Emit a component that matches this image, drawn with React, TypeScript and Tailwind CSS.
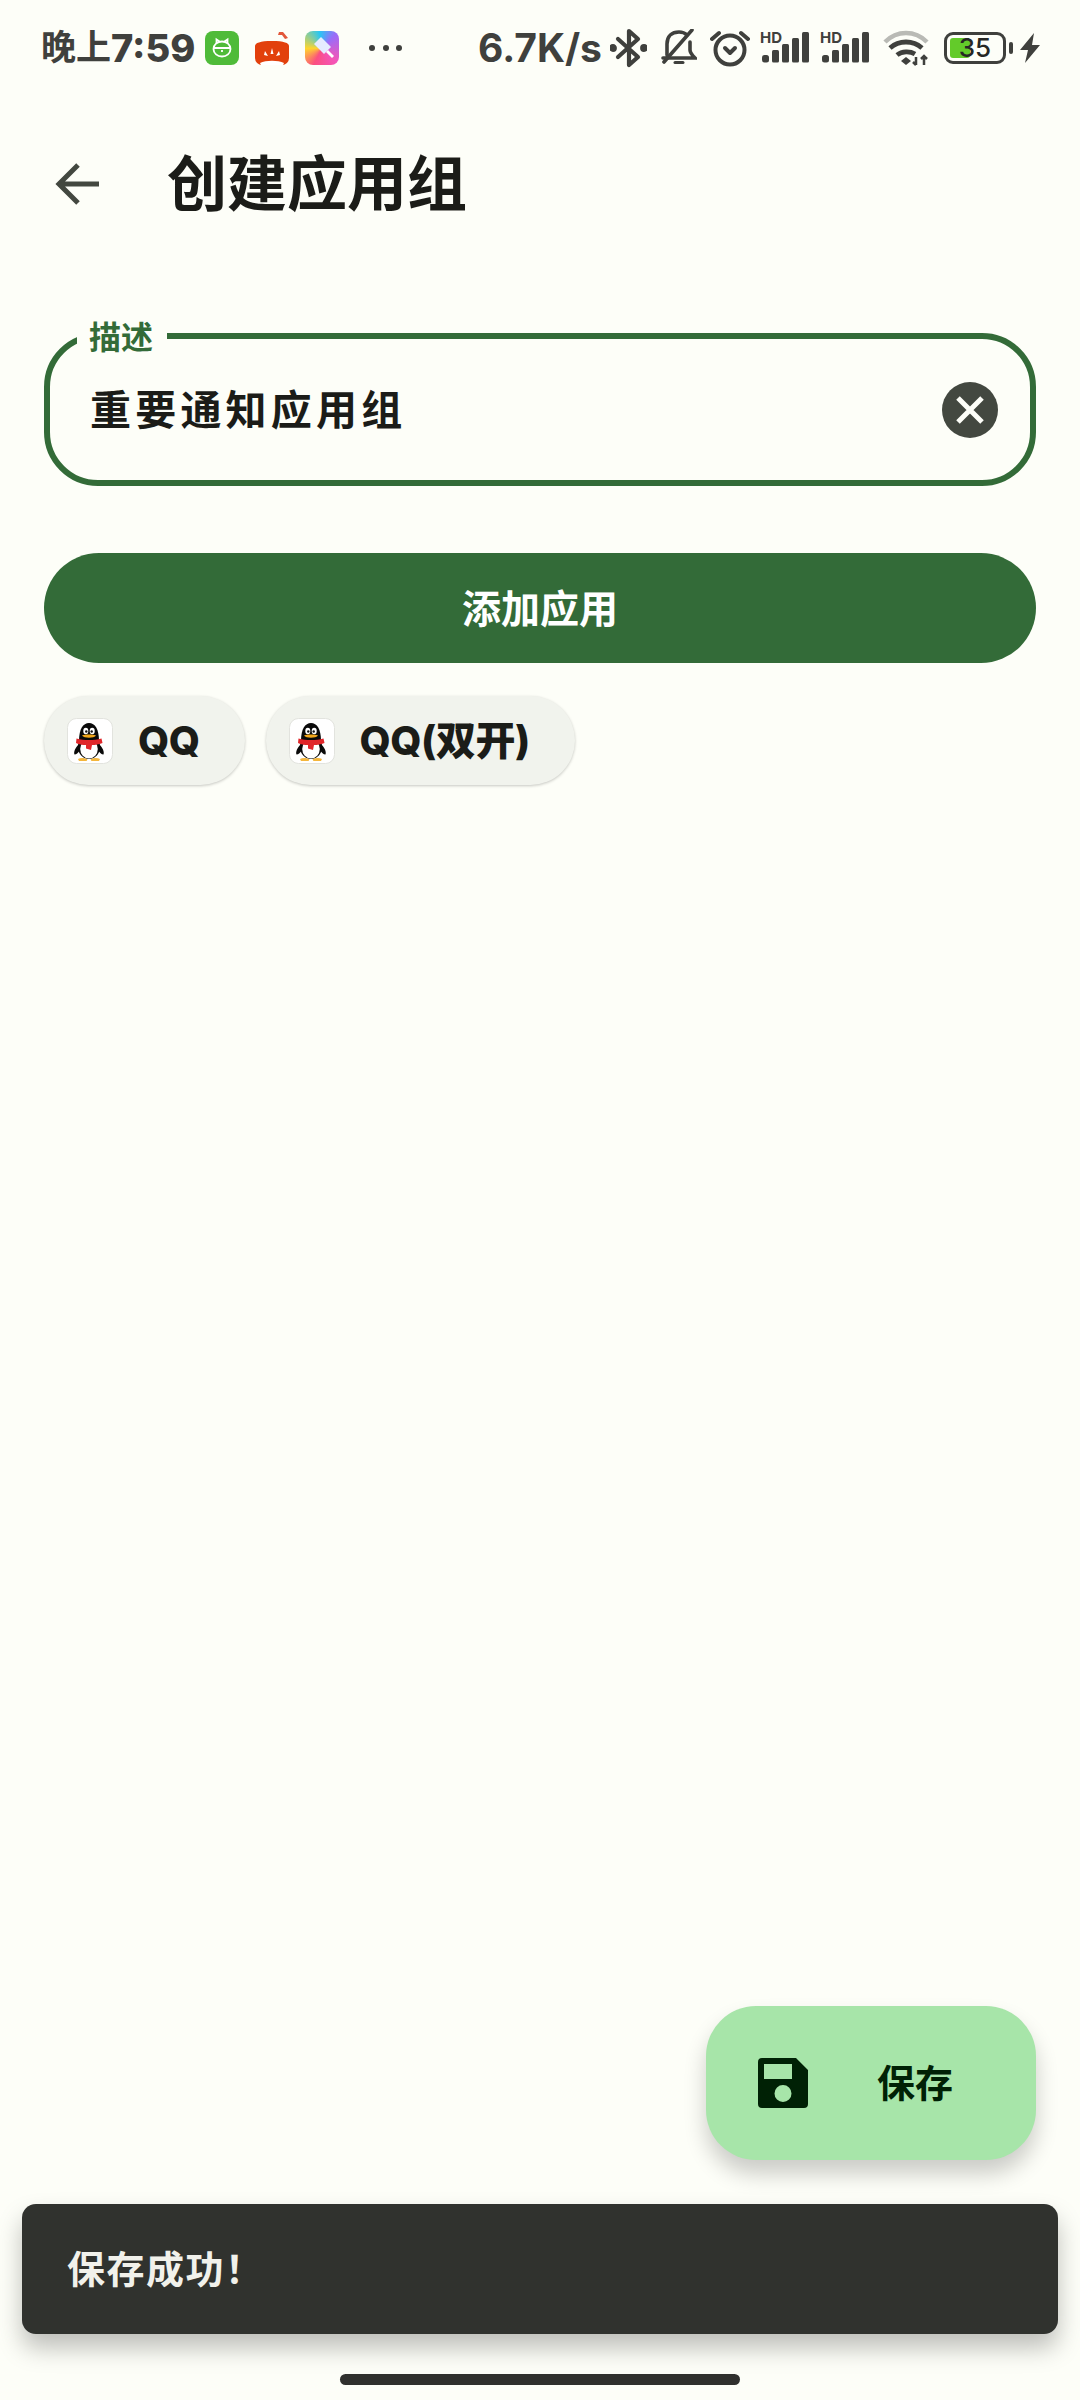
import React from "react";

const Dark = "#3f403d";

function Penguin() {
  return (
    <svg viewBox="0 0 46 46" className="w-[46px] h-[46px]">
      <rect x="0.5" y="0.5" width="45" height="45" rx="9" fill="#fff" stroke="#e2e3de" />
      <path d="M12 26C8 30 6.500 34 7.500 36.500c2 0 4-2 5.500-4.500zM32 26c4 4 5.500 8 4.500 10.500-2 0-4-2-5.500-4.500z" fill="#0a0a0a" />
      <ellipse cx="22" cy="29" rx="11" ry="12" fill="#0a0a0a" />
      <ellipse cx="22" cy="31" rx="8.800" ry="9.500" fill="#fff" />
      <path d="M12 23C12 11 16 5 22 5s10 6 10 18z" fill="#0a0a0a" />
      <ellipse cx="18.800" cy="13" rx="2.500" ry="3.300" fill="#fff" />
      <ellipse cx="25.200" cy="13" rx="2.500" ry="3.300" fill="#fff" />
      <circle cx="19.300" cy="13.500" r="1.200" fill="#111" />
      <circle cx="24.700" cy="13.500" r="1.200" fill="#111" />
      <path d="M15 17.500c3-1.400 11-1.400 14 0-2 3-12 3-14 0z" fill="#f2a71b" />
      <path d="M9.500 20.500c8 2 17 2 25 0l1 4.500c-4 1.500-7 2-10.500 2l-1 5-5-1.500 0-3.500c-4 0-7-.5-10-2z" fill="#e0262a" />
      <path d="M11 41c3-1.500 7-1 9.500.5l-1 1.500h-7.500zM33 41c-3-1.500-7-1-9.500.5l1 1.500h7.500z" fill="#f4b63c" />
    </svg>
  );
}

function Chip({ label }: { label: string }) {
  return (
    <div className="h-[89px] rounded-full bg-[#f1f3ed] shadow-[0_1px_3px_rgba(0,0,0,0.22)] flex items-center pl-[23px] pr-[45px] gap-[25px]">
      <Penguin />
      <span className="text-[40px] leading-none font-extrabold tracking-[-0.5px] text-[#1b1c18]">{label}</span>
    </div>
  );
}

function Signal() {
  return (
    <div className="relative w-[50px] h-[34px]">
      <span className="absolute left-0 top-0 text-[15px] leading-[13px] font-bold text-[#3f403d]">HD</span>
      <svg viewBox="0 0 50 34" className="w-[50px] h-[34px]" fill={Dark}>
        <rect x="2" y="24" width="7" height="7.500" rx="2.500" />
        <rect x="12" y="19" width="7" height="12.500" rx="1.500" />
        <rect x="22" y="13" width="7" height="18.500" rx="1.500" />
        <rect x="32" y="7" width="7" height="24.500" rx="1.500" />
        <rect x="42" y="1" width="7" height="30.500" rx="1.500" />
      </svg>
    </div>
  );
}

function StatusBar() {
  return (
    <div className="h-[94px] flex items-center pl-[41px] pt-[1px] text-[#3f403d] font-bold">
      <div className="w-[164px] flex items-center whitespace-nowrap">
        <span className="text-[35px] leading-none">晚上</span>
        <span className="text-[38px] leading-none font-extrabold">7:59</span>
      </div>
      <svg viewBox="0 0 34 34" className="w-[34px] h-[34px]">
        <rect width="34" height="34" rx="8" fill="#4fbb39" />
        <g fill="none" stroke="#fff" strokeWidth="1.800">
          <ellipse cx="17" cy="18" rx="8.500" ry="7.500" />
          <path d="M8.800 17h16.400M11.500 12V8.500l3 2M22.500 12V8.500l-3 2" />
          <path d="M17 19v2" />
        </g>
      </svg>
      <svg viewBox="0 0 34 34" className="w-[34px] h-[34px] ml-[16px]">
        <path d="M0 15C0 12 5 10 17 10s17 2 17 5v12a7 7 0 0 1-7 7H7a7 7 0 0 1-7-7z" fill="#e2400c" />
        <path d="M24 1h4l5 6-3 1-3-4h-4z" fill="#e2573a" />
        <path d="M10 20l3 5-4-1zM17 17l1.500 6h-3zM24 20l1 4-4 1z" fill="#fff" />
        <path d="M5 32c6-3 18-3 24 0l-1 2H6z" fill="#fff" />
      </svg>
      <div className="w-[34px] h-[34px] ml-[16px] rounded-[8px] bg-[conic-gradient(from_45deg,#9a6cf8,#f455b8_25%,#fb4f80_45%,#ffd52e_62%,#28c6f4_85%,#9a6cf8)]">
        <svg viewBox="0 0 34 34" className="w-[34px] h-[34px]">
          <path d="M16 6l10 10-7 7L9 13z" fill="#e6ecff" />
          <path d="M21 21l2-2 6 6-2 2z" fill="#fff" />
        </svg>
      </div>
      <div className="w-[33px] ml-[30px] flex justify-between">
        <span className="w-[6px] h-[6px] rounded-full bg-[#3f403d]" />
        <span className="w-[6px] h-[6px] rounded-full bg-[#3f403d]" />
        <span className="w-[6px] h-[6px] rounded-full bg-[#3f403d]" />
      </div>
      <span className="text-[39px] leading-none w-[132px] ml-[76px] whitespace-nowrap">6.7K/s</span>
      <svg viewBox="0 0 37 40" className="w-[37px] h-[40px]" fill="none" stroke={Dark} strokeWidth="4.200" strokeLinejoin="round" strokeLinecap="round">
        <path d="M8 11l20 18-9 8V3l9 8L8 29" />
        <circle cx="3" cy="20" r="1.800" fill={Dark} />
        <circle cx="34" cy="20" r="1.800" fill={Dark} />
      </svg>
      <svg viewBox="0 0 36 38" className="w-[36px] h-[38px] ml-[14px]" fill="none" stroke={Dark} strokeWidth="3.600" strokeLinecap="round">
        <path d="M6 26V15C6 7 11 3 18 3c3 0 6 1 8 3M29 13v8c0 3 2 5 5 8H2" />
        <path d="M3 33L31 1" />
        <path d="M14 33.500h8" strokeWidth="3" />
      </svg>
      <svg viewBox="0 0 40 38" className="w-[40px] h-[38px] ml-[13px]" fill="none" stroke={Dark} strokeWidth="4" strokeLinecap="round" strokeLinejoin="round">
        <circle cx="20" cy="21" r="14.500" />
        <path d="M15 19l5 5 5-5" />
        <path d="M2 10l7-6M38 10l-7-6" />
      </svg>
      <div className="ml-[10px]"><Signal /></div>
      <div className="ml-[10px]"><Signal /></div>
      <svg viewBox="0 0 46 36" className="w-[46px] h-[36px] ml-[13px]" fill="none">
        <path d="M2 12C14 0 32 0 44 12" stroke="#b9bab5" strokeWidth="4.500" />
        <path d="M7 18c9-8 23-8 32 0" stroke={Dark} strokeWidth="4.800" />
        <path d="M14 25c5-4 13-4 18-1" stroke={Dark} strokeWidth="4.800" />
        <path d="M18 31l5-4 5 4-5 4z" fill={Dark} />
        <path d="M33 27v8M30 32l3 3M41 35v-9M38 29l3-3 3 3" stroke={Dark} strokeWidth="2.500" />
      </svg>
      <div className="ml-[15px] w-[62px] h-[32px] rounded-[9px] border-[3px] border-[#3f403d] p-[3px] relative flex items-center">
        <div className="w-[20px] h-[20px] rounded-[3px] bg-[#63cb2a]" />
        <span className="absolute inset-0 flex items-center justify-center text-[26px] leading-none font-medium text-[#262724]">35</span>
      </div>
      <div className="w-[4px] h-[12px] rounded-full bg-[#3f403d] ml-[3px]" />
      <svg viewBox="0 0 20 30" className="w-[20px] h-[30px] ml-[7px]" fill={Dark}>
        <path d="M14 0L0 17h8L5 30l15-18h-8z" />
      </svg>
    </div>
  );
}

export default function App() {
  return (
    <div className="w-[1080px] h-[2400px] bg-[#fdfef8] flex flex-col overflow-hidden font-['Inter','Noto_Sans_CJK_SC',sans-serif]">
      <StatusBar />
      <header className="h-[180px] flex items-center pl-[55px]">
        <svg viewBox="0 0 44 44" className="w-[44px] h-[44px]" fill="none" stroke="#434840" strokeWidth="5">
          <path d="M44 22H4M23 3L4 22l19 19" />
        </svg>
        <h1 className="ml-[68px] text-[60px] leading-none font-bold text-[#1b1c18]">创建应用组</h1>
      </header>

      <main className="px-[44px] flex flex-col">
        <div className="h-[153px] mt-[59px] rounded-[54px] border-[6px] border-[#336b38] relative flex items-center pl-[40px] pr-[32px] justify-between">
          <span className="absolute left-[27px] -top-[17px] pl-[12px] pr-[14px] bg-[#fdfef8] text-[32px] leading-none font-bold text-[#336b38]">描述</span>
          <span className="text-[41px] tracking-[4.200px] font-bold leading-none text-[#1b1c18] pt-[1px]">重要通知应用组</span>
          <div className="w-[56px] h-[56px] rounded-full bg-[#434840] flex items-center justify-center">
            <svg viewBox="0 0 28 28" className="w-[28px] h-[28px]" stroke="#fdfef8" strokeWidth="5">
              <path d="M2 2l24 24M26 2L2 26" />
            </svg>
          </div>
        </div>

        <button className="mt-[67px] h-[110px] rounded-full bg-[#336b38] text-white text-[39px] font-bold leading-none">添加应用</button>

        <div className="mt-[33px] flex gap-[21px]">
          <Chip label="QQ" />
          <Chip label="QQ(双开)" />
        </div>
      </main>

      <div className="mt-auto flex flex-col">
        <div className="self-end mr-[44px] w-[330px] h-[154px] rounded-[50px] bg-[#a7e5a9] shadow-[0_14px_22px_rgba(0,0,0,0.2)] flex items-center pl-[52px] text-[#002105]">
          <svg viewBox="0 0 50 50" className="w-[50px] h-[50px]" fill="#002105" fillRule="evenodd">
            <path d="M4 0h34l12 12v34a4 4 0 0 1-4 4H4a4 4 0 0 1-4-4V4a4 4 0 0 1 4-4zM6 6v15h28V6zM25 27a8.500 8.500 0 1 0 0 17a8.500 8.500 0 1 0 0-17z" />
          </svg>
          <span className="ml-[69px] text-[38px] leading-none font-bold">保存</span>
        </div>
        <div className="mt-[44px] mx-[22px] h-[130px] rounded-[14px] bg-[#30322e] shadow-[0_14px_24px_rgba(0,0,0,0.25)] flex items-center pl-[45px]">
          <span className="text-[38px] tracking-[1.500px] leading-none font-bold text-[#f1f1eb]">保存成功！</span>
        </div>
        <div className="mt-[40px] mb-[15px] self-center w-[400px] h-[11px] rounded-full bg-[#30302e]" />
      </div>
    </div>
  );
}
